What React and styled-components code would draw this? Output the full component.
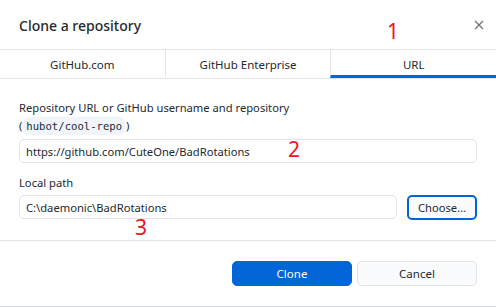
import React from "react";
import styled, { createGlobalStyle } from "styled-components";

const Global = createGlobalStyle`
  html, body { margin: 0; padding: 0; background: #fff; }
  body { font-family: "Noto Sans", "Open Sans", sans-serif; color: #24292e; }
  * { box-sizing: border-box; }
`;

const Dialog = styled.div`
  position: relative;
  width: 496px;
  height: 307px;
  background: #fff;
  border-bottom: 1px solid #d1d5da;
  display: flex;
  flex-direction: column;
`;

const Header = styled.div`
  height: 49px;
  flex: none;
  display: flex;
  align-items: center;
  justify-content: space-between;
  padding: 0 9px 0 19px;
`;

const Title = styled.h1`
  margin: 0;
  font-size: 14px;
  font-weight: 500;
  color: #24292e;
  padding-top: 2px;
`;

const Close = styled.button`
  border: 0;
  background: none;
  width: 16px;
  height: 16px;
  padding: 0;
  display: flex;
  align-items: center;
  justify-content: center;
  color: #6a737d;
`;

const Tabs = styled.div`
  display: flex;
  flex: none;
  height: 30px;
  border-top: 1px solid #e1e4e8;
  border-bottom: 1px solid #e1e4e8;
`;

const Tab = styled.div`
  flex: 1;
  display: flex;
  align-items: center;
  justify-content: center;
  font-size: 11.5px;
  color: #24292e;
  border-left: ${(p) => (p.$first ? "0" : "1px solid #e1e4e8")};
  border-bottom: 3px solid ${(p) => (p.$active ? "#0366d6" : "transparent")};
  padding-top: 3px;
`;

const Content = styled.div`
  padding: 20px 19px 20px 19px;
  display: flex;
  flex-direction: column;
  flex: none;
`;

const Label = styled.div`
  font-size: 11.2px;
  line-height: 18px;
  color: #24292e;
`;

const Hint = styled.div`
  font-size: 11.2px;
  line-height: 18px;
  display: flex;
  align-items: center;
`;

const Code = styled.code`
  font-family: "DejaVu Sans Mono", "Liberation Mono", monospace;
  font-size: 10.6px;
  background: #f1f5fb;
  border-radius: 6px;
  padding: 0 3px;
  margin: 0 1px;
  line-height: 18px;
`;

const Input = styled.div`
  height: 24px;
  border: 1px solid #e1e4e8;
  border-radius: 5px;
  font-size: 11.2px;
  display: flex;
  align-items: center;
  padding: 0 6px;
  color: #24292e;
  flex: ${(p) => (p.$grow ? 1 : "none")};
  margin-top: ${(p) => p.$mt || 0}px;
`;

const Row = styled.div`
  display: flex;
  gap: 10px;
  margin-top: 3px;
`;

const Field = styled.div`
  margin-top: ${(p) => p.$mt || 0}px;
  display: flex;
  flex-direction: column;
`;

const ChooseButton = styled.button`
  width: 70px;
  height: 25px;
  border: 2px solid #0366d6;
  border-radius: 5px;
  background: #fafbfc;
  font-family: inherit;
  font-size: 11.2px;
  color: #24292e;
  padding: 0;
`;

const Footer = styled.div`
  border-top: 1px solid #e1e4e8;
  display: flex;
  justify-content: flex-end;
  gap: 5px;
  padding: 20px 19px 0 0;
`;

const Button = styled.button`
  width: 120px;
  height: 25px;
  border-radius: 5px;
  font-family: inherit;
  font-size: 11.5px;
  padding: 0;
  background: ${(p) => (p.$primary ? "#0366d6" : "#fafbfc")};
  color: ${(p) => (p.$primary ? "#fff" : "#24292e")};
  border: 1px solid ${(p) => (p.$primary ? "#0366d6" : "#e1e4e8")};
`;

const Mark = styled.span`
  position: absolute;
  left: ${(p) => p.$x}px;
  top: ${(p) => p.$y}px;
  color: #f0141e;
  font-family: "Noto Sans", sans-serif;
  font-size: 21px;
  line-height: 1;
`;

export default function App() {
  return (
    <>
      <Global />
      <Dialog>
        <Header>
          <Title>Clone a repository</Title>
          <Close aria-label="Close">
            <svg width="10" height="10" viewBox="0 0 10 10">
              <path d="M1 1L9 9M9 1L1 9" stroke="#6a737d" strokeWidth="1.3" />
            </svg>
          </Close>
        </Header>
        <Tabs>
          <Tab $first>GitHub.com</Tab>
          <Tab>GitHub Enterprise</Tab>
          <Tab $active>URL</Tab>
        </Tabs>
        <Content>
          <Field>
            <Label>Repository URL or GitHub username and repository</Label>
            <Hint>
              (<Code>hubot/cool-repo</Code>)
            </Hint>
            <Input $mt={4}>https://github.com/CuteOne/BadRotations</Input>
          </Field>
          <Field $mt={11}>
            <Label>Local path</Label>
            <Row>
              <Input $grow>C:\daemonic\BadRotations</Input>
              <ChooseButton>Choose…</ChooseButton>
            </Row>
          </Field>
        </Content>
        <Footer>
          <Button $primary>Clone</Button>
          <Button>Cancel</Button>
        </Footer>
        <Mark $x={387} $y={21}>1</Mark>
        <Mark $x={288} $y={139}>2</Mark>
        <Mark $x={135} $y={217}>3</Mark>
      </Dialog>
    </>
  );
}
